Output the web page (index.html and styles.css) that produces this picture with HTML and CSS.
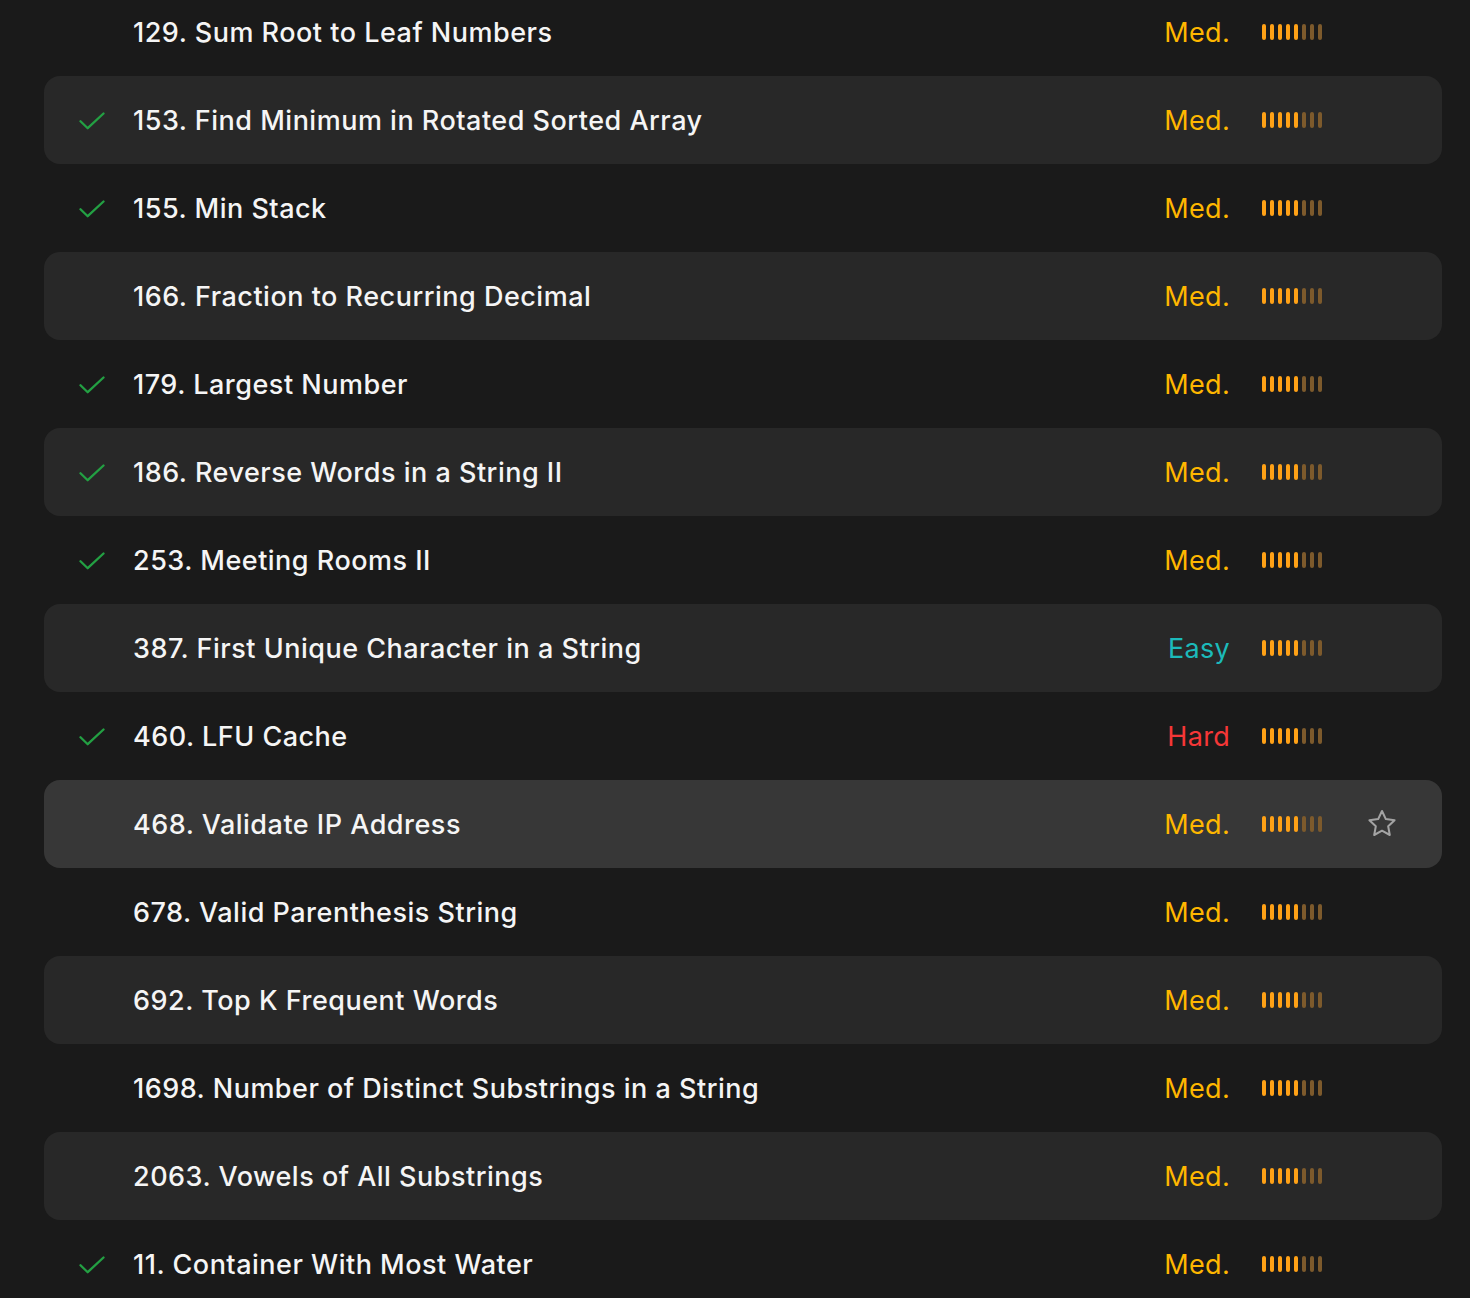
FILE: index.html
```html
<!DOCTYPE html>
<html>
<head>
<meta charset="utf-8">
<link rel="stylesheet" href="styles.css">
</head>
<body>
<div class="list" id="list">
  <div class="row"><div class="status"></div><div class="title">129. Sum Root to Leaf Numbers</div><div class="diff med">Med.</div><div class="bars"><i></i><i></i><i></i><i></i><i></i><i class="dim"></i><i class="dim"></i><i class="dim"></i></div><div class="fav"></div></div>
  <div class="row alt"><div class="status"><svg viewBox="0 0 26 18" width="26" height="18"><path d="M1.5 9.2 L8.7 16.2 L24.5 1.5" fill="none" stroke="#23a043" stroke-width="2.3" stroke-linecap="round" stroke-linejoin="round"/></svg></div><div class="title">153. Find Minimum in Rotated Sorted Array</div><div class="diff med">Med.</div><div class="bars"><i></i><i></i><i></i><i></i><i></i><i class="dim"></i><i class="dim"></i><i class="dim"></i></div><div class="fav"></div></div>
  <div class="row"><div class="status"><svg viewBox="0 0 26 18" width="26" height="18"><path d="M1.5 9.2 L8.7 16.2 L24.5 1.5" fill="none" stroke="#23a043" stroke-width="2.3" stroke-linecap="round" stroke-linejoin="round"/></svg></div><div class="title">155. Min Stack</div><div class="diff med">Med.</div><div class="bars"><i></i><i></i><i></i><i></i><i></i><i class="dim"></i><i class="dim"></i><i class="dim"></i></div><div class="fav"></div></div>
  <div class="row alt"><div class="status"></div><div class="title">166. Fraction to Recurring Decimal</div><div class="diff med">Med.</div><div class="bars"><i></i><i></i><i></i><i></i><i></i><i class="dim"></i><i class="dim"></i><i class="dim"></i></div><div class="fav"></div></div>
  <div class="row"><div class="status"><svg viewBox="0 0 26 18" width="26" height="18"><path d="M1.5 9.2 L8.7 16.2 L24.5 1.5" fill="none" stroke="#23a043" stroke-width="2.3" stroke-linecap="round" stroke-linejoin="round"/></svg></div><div class="title">179. Largest Number</div><div class="diff med">Med.</div><div class="bars"><i></i><i></i><i></i><i></i><i></i><i class="dim"></i><i class="dim"></i><i class="dim"></i></div><div class="fav"></div></div>
  <div class="row alt"><div class="status"><svg viewBox="0 0 26 18" width="26" height="18"><path d="M1.5 9.2 L8.7 16.2 L24.5 1.5" fill="none" stroke="#23a043" stroke-width="2.3" stroke-linecap="round" stroke-linejoin="round"/></svg></div><div class="title">186. Reverse Words in a String II</div><div class="diff med">Med.</div><div class="bars"><i></i><i></i><i></i><i></i><i></i><i class="dim"></i><i class="dim"></i><i class="dim"></i></div><div class="fav"></div></div>
  <div class="row"><div class="status"><svg viewBox="0 0 26 18" width="26" height="18"><path d="M1.5 9.2 L8.7 16.2 L24.5 1.5" fill="none" stroke="#23a043" stroke-width="2.3" stroke-linecap="round" stroke-linejoin="round"/></svg></div><div class="title">253. Meeting Rooms II</div><div class="diff med">Med.</div><div class="bars"><i></i><i></i><i></i><i></i><i></i><i class="dim"></i><i class="dim"></i><i class="dim"></i></div><div class="fav"></div></div>
  <div class="row alt"><div class="status"></div><div class="title">387. First Unique Character in a String</div><div class="diff easy">Easy</div><div class="bars"><i></i><i></i><i></i><i></i><i></i><i class="dim"></i><i class="dim"></i><i class="dim"></i></div><div class="fav"></div></div>
  <div class="row"><div class="status"><svg viewBox="0 0 26 18" width="26" height="18"><path d="M1.5 9.2 L8.7 16.2 L24.5 1.5" fill="none" stroke="#23a043" stroke-width="2.3" stroke-linecap="round" stroke-linejoin="round"/></svg></div><div class="title">460. LFU Cache</div><div class="diff hard">Hard</div><div class="bars"><i></i><i></i><i></i><i></i><i></i><i class="dim"></i><i class="dim"></i><i class="dim"></i></div><div class="fav"></div></div>
  <div class="row hover"><div class="status"></div><div class="title">468. Validate IP Address</div><div class="diff med">Med.</div><div class="bars"><i></i><i></i><i></i><i></i><i></i><i class="dim"></i><i class="dim"></i><i class="dim"></i></div><div class="fav"><svg viewBox="0 0 30 30" width="32" height="32"><path d="M15 2.8 L18.6 10.4 L26.8 11.4 L20.8 17.1 L22.3 25.3 L15 21.3 L7.7 25.3 L9.2 17.1 L3.2 11.4 L11.4 10.4 Z" fill="none" stroke="#a3a3a3" stroke-width="1.9" stroke-linejoin="round"/></svg></div></div>
  <div class="row"><div class="status"></div><div class="title">678. Valid Parenthesis String</div><div class="diff med">Med.</div><div class="bars"><i></i><i></i><i></i><i></i><i></i><i class="dim"></i><i class="dim"></i><i class="dim"></i></div><div class="fav"></div></div>
  <div class="row alt"><div class="status"></div><div class="title">692. Top K Frequent Words</div><div class="diff med">Med.</div><div class="bars"><i></i><i></i><i></i><i></i><i></i><i class="dim"></i><i class="dim"></i><i class="dim"></i></div><div class="fav"></div></div>
  <div class="row"><div class="status"></div><div class="title">1698. Number of Distinct Substrings in a String</div><div class="diff med">Med.</div><div class="bars"><i></i><i></i><i></i><i></i><i></i><i class="dim"></i><i class="dim"></i><i class="dim"></i></div><div class="fav"></div></div>
  <div class="row alt"><div class="status"></div><div class="title">2063. Vowels of All Substrings</div><div class="diff med">Med.</div><div class="bars"><i></i><i></i><i></i><i></i><i></i><i class="dim"></i><i class="dim"></i><i class="dim"></i></div><div class="fav"></div></div>
  <div class="row"><div class="status"><svg viewBox="0 0 26 18" width="26" height="18"><path d="M1.5 9.2 L8.7 16.2 L24.5 1.5" fill="none" stroke="#23a043" stroke-width="2.3" stroke-linecap="round" stroke-linejoin="round"/></svg></div><div class="title">11. Container With Most Water</div><div class="diff med">Med.</div><div class="bars"><i></i><i></i><i></i><i></i><i></i><i class="dim"></i><i class="dim"></i><i class="dim"></i></div><div class="fav"></div></div>
</div>
</body>
</html>
```

FILE: styles.css
```css
html, body {
  margin: 0;
  padding: 0;
  background: #1a1a1a;
  overflow: hidden;
}
body {
  font-family: Inter, "Noto Sans", "Liberation Sans", sans-serif;
  color: #f5f5f5;
  -webkit-font-smoothing: antialiased;
}
.list {
  margin: -12px 28px 0 44px;
  display: flex;
  flex-direction: column;
}
.row {
  height: 88px;
  display: flex;
  align-items: center;
  border-radius: 16px;
  box-sizing: border-box;
}
.row.alt { background: #282828; }
.row.hover { background: #373737; }
.status {
  width: 89px;
  padding-left: 35px;
  box-sizing: border-box;
  display: flex;
  align-items: center;
}
.status svg { display: block; margin-top: 2px; }
.title {
  flex: 1;
  font-size: 27px;
  font-weight: 500;
  letter-spacing: 0.5px;
  white-space: nowrap;
}
.diff {
  width: 100px;
  text-align: right;
  font-size: 27px;
  font-weight: 400;
  letter-spacing: 0.3px;
}
.diff.med { color: #ffb700; }
.diff.easy { color: #1cbaba; }
.diff.hard { color: #f63737; }
.bars {
  margin-left: 32px;
  width: 60px;
  display: flex;
  gap: 4px;
  align-items: center;
}
.bars i {
  display: block;
  width: 4px;
  height: 16px;
  border-radius: 2px;
  background: #ffa116;
}
.bars i.dim { background: #7d5a2c; }
.fav {
  width: 120px;
  display: flex;
  justify-content: flex-end;
  padding-right: 44px;
  box-sizing: border-box;
}
.fav svg { display: block; }
```
